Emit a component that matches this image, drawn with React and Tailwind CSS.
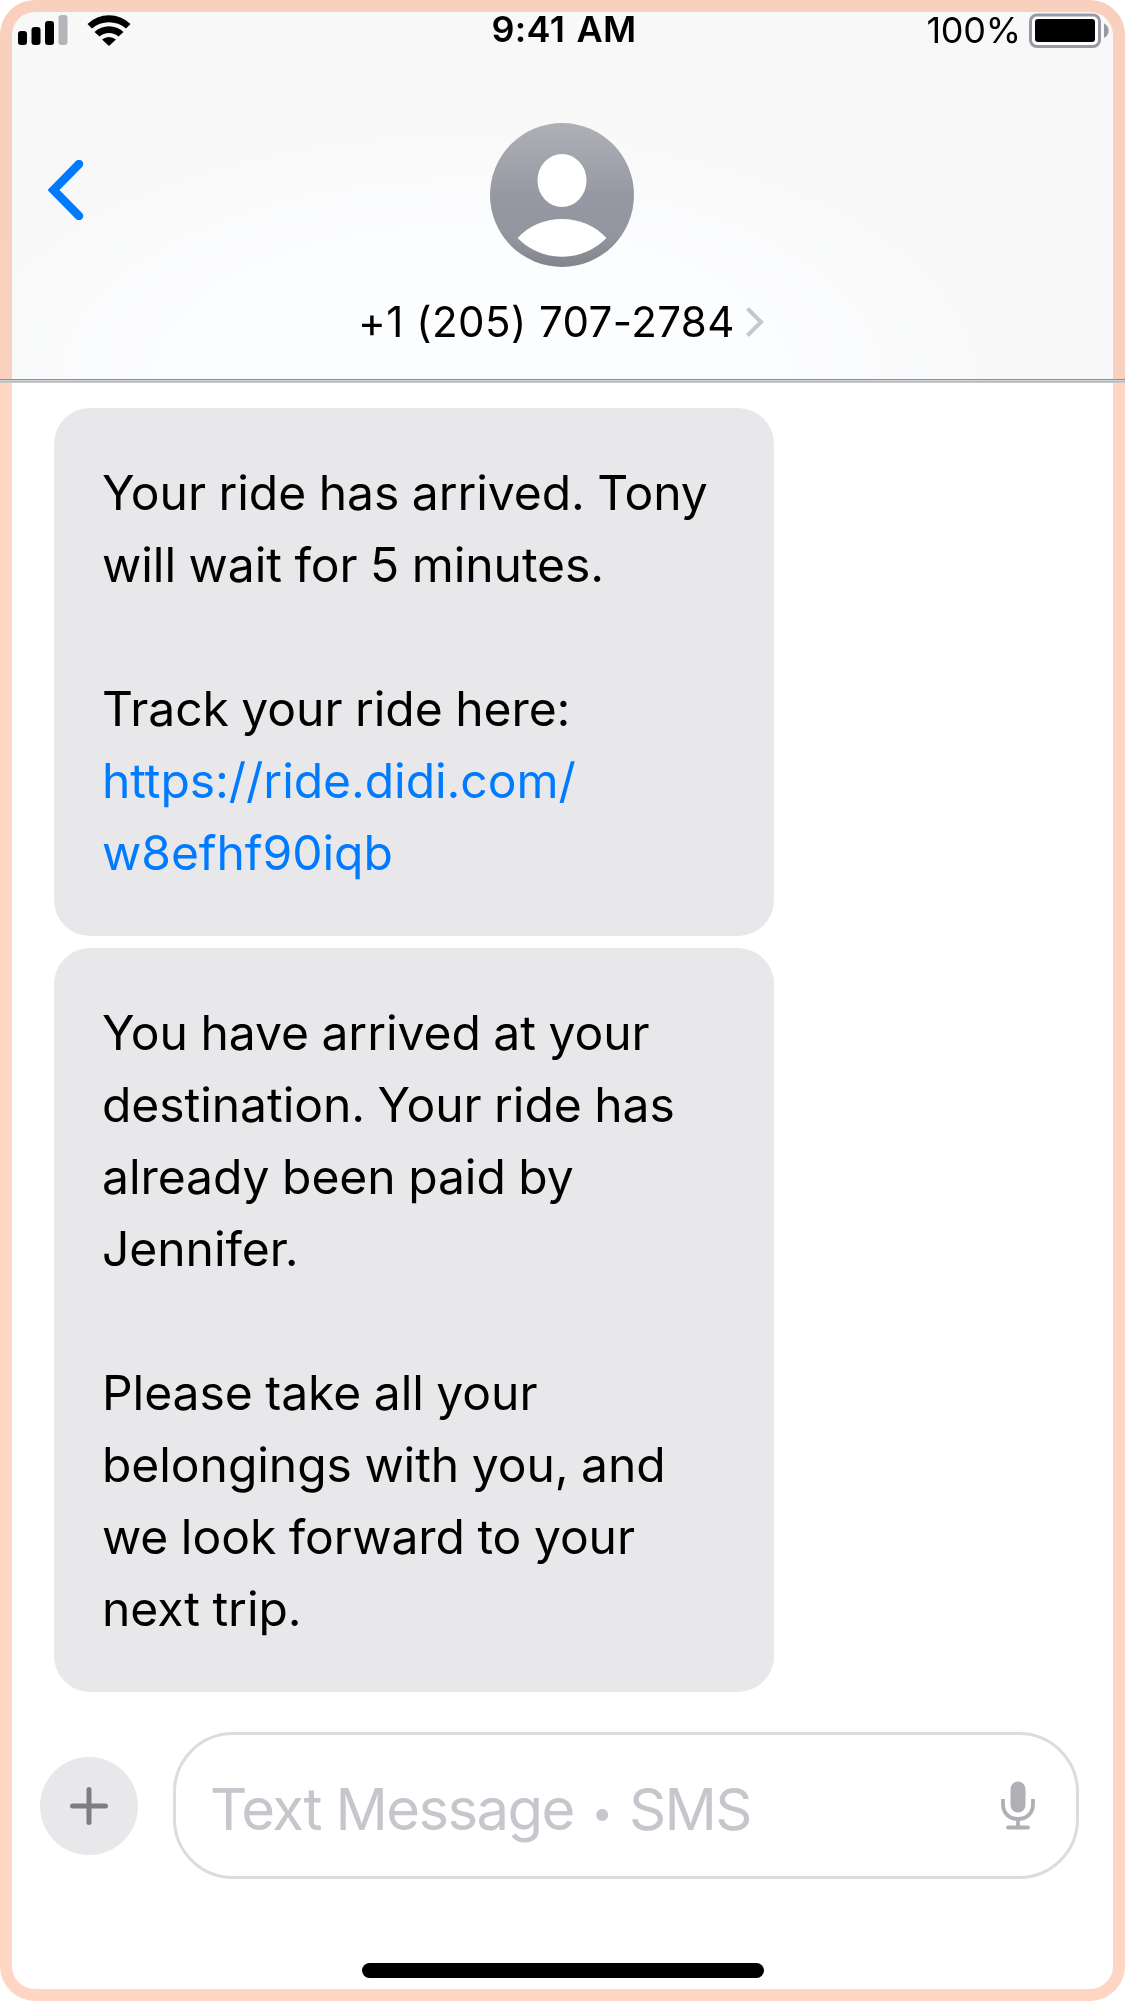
import React from 'react';

const messages = [
  {
    id: 1,
    lines: ['Your ride has arrived. Tony', 'will wait for 5 minutes.', '', 'Track your ride here:'],
    link: ['https://ride.didi.com/', 'w8efhf90iqb'],
  },
  {
    id: 2,
    lines: [
      'You have arrived at your',
      'destination. Your ride has',
      'already been paid by',
      'Jennifer.',
      '',
      'Please take all your',
      'belongings with you, and',
      'we look forward to your',
      'next trip.',
    ],
  },
];

const SignalIcon = () => (
  <svg width="50" height="30" viewBox="0 0 50 30">
    <rect x="0" y="16" width="9" height="14" rx="3" />
    <rect x="13.5" y="12" width="9" height="18" rx="3" />
    <rect x="27" y="6" width="9" height="24" rx="3" />
    <rect x="40.5" y="0" width="9" height="30" rx="3" fill="#b4b5ba" />
  </svg>
);

const WifiIcon = () => (
  <svg width="44" height="31" viewBox="0 0 44 31">
    <path d="M0.500 9 A31 31 0 0 1 43.500 9 L39 13.500 A26 26 0 0 0 5 13.500 Z" />
    <path d="M7.500 17 A21 21 0 0 1 36.500 17 L31.500 21.500 A14.500 14.500 0 0 0 12.500 21.500 Z" />
    <path d="M15 24.500 A11 11 0 0 1 29 24.500 L22 31 Z" />
  </svg>
);

const BatteryIcon = () => (
  <svg width="81" height="36" viewBox="0 0 81 36">
    <rect x="1.5" y="3" width="69" height="31.500" rx="6.5" fill="#fff" stroke="#979aa4" strokeWidth="3" />
    <rect x="6" y="7" width="60" height="23" rx="3" fill="#000" />
    <path d="M75 11.5 A8 8 0 0 1 75 26 Z" fill="#979aa4" />
  </svg>
);

const Avatar = () => (
  <svg width="144" height="144" viewBox="0 0 144 144">
    <defs>
      <linearGradient id="avatar" x1="0" y1="0" x2="0" y2="1">
        <stop offset="0" stopColor="#afb0b5" />
        <stop offset="0.5" stopColor="#9699a3" />
        <stop offset="0.8" stopColor="#92959e" />
        <stop offset="1" stopColor="#83858b" />
      </linearGradient>
    </defs>
    <circle cx="72" cy="72" r="72" fill="url(#avatar)" />
    <ellipse cx="72" cy="57.5" rx="24.5" ry="26.5" fill="#fff" />
    <path d="M27.5 115 C50 89.500 94 89.500 116.500 115 C92 140 52 140 27.500 115 Z" fill="#fff" />
  </svg>
);

const StatusBar = () => (
  <div className="flex h-[36px] items-start justify-between pr-[3px] pl-[6px]">
    <div className="flex flex-1 gap-[19px] pt-[3px]">
      <SignalIcon />
      <WifiIcon />
    </div>
    <time className="text-[36px] leading-[35px] font-semibold tracking-[0.3px] [word-spacing:2px]">9:41 AM</time>
    <div className="flex flex-1 justify-end gap-[8px]">
      <span className="text-[36px] leading-[36px] tracking-[-0.2px]">100%</span>
      <BatteryIcon />
    </div>
  </div>
);

const Header = () => (
  <header className="relative h-[379px] px-3 pt-3">
    <div className="absolute inset-0 z-10 rounded-t-[35px] bg-[radial-gradient(ellipse_50%_72%_at_42%_100%,#fcfdff_50%,#f8f8f8_100%)] mix-blend-multiply" />
    <div className="relative z-20">
      <StatusBar />
      <button type="button" aria-label="Back" className="absolute top-[148px] left-[36px]">
        <svg width="36" height="60" viewBox="0 0 36 60" fill="none" stroke="#007aff" strokeWidth="8.500" strokeLinecap="round" strokeLinejoin="miter">
          <path d="M31 4 L5.500 30 L31 56" />
        </svg>
      </button>
      <div className="flex flex-col items-center pt-[75px] pr-px">
        <Avatar />
        <div className="mt-[29px] flex items-center gap-[11px] pr-[2px]">
          <span className="text-[42px] leading-[52px] tracking-[0.45px]">+1 (205) 707-2784</span>
          <svg width="18" height="30" viewBox="0 0 18 30" fill="none" stroke="#c6c7cb" strokeWidth="4">
            <path d="M1.500 1.500 L15 15 L1.500 28.500" />
          </svg>
        </div>
      </div>
    </div>
  </header>
);

const Bubble = ({ lines, link }) => (
  <div className="w-[720px] rounded-[36px] bg-[#e8e8ea] px-[48px] pt-[49px] pb-[47px] text-[48px] leading-[72px] tracking-[-0.05px] [word-spacing:-0.9px] whitespace-nowrap">
    {lines.map((line, i) => (
      <p key={i} className="h-[72px]">
        {line}
      </p>
    ))}
    {link && (
      <a href="#ride" className="block text-[#007aff]">
        {link[0]}
        <br />
        {link[1]}
      </a>
    )}
  </div>
);

const Composer = () => (
  <footer className="mt-[40px] flex items-center gap-[35px] pl-[40px]">
    <button type="button" aria-label="Add" className="flex h-[98px] w-[98px] items-center justify-center rounded-full bg-[#e8e8ea]">
      <svg width="38" height="38" viewBox="0 0 38 38" stroke="#7d7e82" strokeWidth="5" strokeLinecap="round">
        <path d="M19 2.500 V35.500 M2.500 19 H35.500" />
      </svg>
    </button>
    <div className="flex h-[147px] w-[906px] items-center justify-between rounded-[60px] border-[3px] border-[#dcdcdf] pr-[41px] pl-[34px]">
      <span className="pt-[7px] text-[58px] leading-[72px] tracking-[-1.600px] whitespace-nowrap text-[#c6c7cc]">
        Text Message <span className="mx-[3px] align-[4px] text-[38px] leading-none">•</span> SMS
      </span>
      <svg width="34" height="49" viewBox="0 0 34 49" fill="none" stroke="#afb0b6" strokeWidth="3.800">
        <rect x="9.500" y="0.500" width="15" height="31" rx="7.500" fill="#afb0b6" stroke="none" />
        <path d="M2 18 V23 C2 33 9 38 17 38 C25 38 32 33 32 23 V18" />
        <path d="M17 38 V46" />
        <path d="M7 46.500 H27" strokeLinecap="round" />
      </svg>
    </div>
  </footer>
);

const App = () => (
  <div className="relative isolate flex h-[2001px] w-[1125px] flex-col overflow-hidden bg-white font-['Inter',sans-serif] text-black">
    <div className="pointer-events-none absolute inset-0 rounded-[35px] border-12 border-[#ffd6c3]" />
    <Header />
    <div className="relative z-20 h-[4px] border-t border-b border-t-[#8f9096] border-b-[#c9cace] bg-linear-to-b from-[#e3e4e8] to-[#a9aab0]" />
    <main className="mt-[25px] flex flex-col gap-3 pl-[54px]">
      {messages.map((msg) => (
        <Bubble key={msg.id} lines={msg.lines} link={msg.link} />
      ))}
    </main>
    <Composer />
    <div className="mt-[84px] ml-[362px] h-[15px] w-[402px] rounded-full bg-black" />
  </div>
);

export default App;
